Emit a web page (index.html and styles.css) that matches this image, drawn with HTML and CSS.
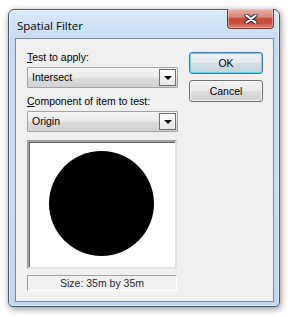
FILE: index.html
```html
<!DOCTYPE html>
<html lang="en">
<head>
    <meta charset="UTF-8">
    <meta name="viewport" content="width=device-width, initial-scale=1.0">
    <title>Spatial Filter</title>
    <link rel="stylesheet" href="styles.css">
</head>

<body>
    <div class="window">
        <div class="titlebar">
            <span class="title">Spatial Filter</span>
            <button type="button" class="close-btn" aria-label="Close">
                <svg width="14" height="10" viewBox="0 0 14 10">
                    <path d="M2.5 1.5 L11.5 8.5 M11.5 1.5 L2.5 8.5" stroke="#3b3340" stroke-width="4.2" stroke-linecap="round" fill="none"/>
                    <path d="M2.5 1.5 L11.5 8.5 M11.5 1.5 L2.5 8.5" stroke="#ffffff" stroke-width="2.2" stroke-linecap="round" fill="none"/>
                </svg>
            </button>
        </div>

        <form action="#" class="client">
            <div class="left-col">
                <label class="field-label"><u>T</u>est to apply:</label>
                <div class="combo">
                    <span class="combo-text">Intersect</span>
                    <span class="combo-arrow"></span>
                </div>

                <label class="field-label"><u>C</u>omponent of item to test:</label>
                <div class="combo">
                    <span class="combo-text">Origin</span>
                    <span class="combo-arrow"></span>
                </div>

                <div class="preview">
                    <svg width="146" height="125" viewBox="0 0 146 125">
                        <circle cx="73.5" cy="62.5" r="52.5" fill="#000"/>
                    </svg>
                </div>
                <div class="size-label">Size: 35m by 35m</div>
            </div>

            <div class="right-col">
                <button type="submit" class="btn default">OK</button>
                <button type="button" class="btn">Cancel</button>
            </div>
        </form>
    </div>
</body>
</html>
```

FILE: styles.css
```css
* {
    box-sizing: border-box;
}

body {
    margin: 0;
    width: 288px;
    height: 317px;
    overflow: hidden;
    background-color: #ffffff;
    font-family: "Liberation Sans", Arial, sans-serif;
    font-size: 10.5px;
    color: #000;
}

.window {
    margin: 9px 0 0 8px;
    width: 272px;
    height: 298px;
    border: 1px solid #4a5566;
    border-radius: 6px 6px 5px 5px;
    padding: 0 5px 4px 6px;
    display: flex;
    flex-direction: column;
    background: linear-gradient(to bottom, #d8e8f9 0%, #c2daf3 12%, #c3dbf4 60%, #bfd8f2 100%);
    box-shadow: inset 0 0 0 1px rgba(255, 255, 255, 0.55), 1px 2px 7px rgba(0, 0, 0, 0.45);
}

.titlebar {
    height: 28px;
    display: flex;
    justify-content: space-between;
    align-items: flex-start;
}

.title {
    font-family: "Open Sans", "Liberation Sans", sans-serif;
    font-size: 11.5px;
    padding: 8px 0 0 2px;
    color: #000;
}

.close-btn {
    margin-top: -1px;
    width: 47px;
    height: 20px;
    padding: 0;
    border: 1px solid #6b3a33;
    border-top: none;
    border-radius: 0 0 4px 4px;
    background: linear-gradient(to bottom, #e9b0a4 0%, #d98a7b 40%, #c44a35 52%, #c9523c 75%, #dc8a77 100%);
    box-shadow: inset 0 0 0 1px rgba(255, 210, 200, 0.45);
    display: flex;
    align-items: center;
    justify-content: center;
}

.client {
    flex: 1;
    margin: 0;
    border: 1px solid #7d8a9c;
    background-color: #f0f0f0;
    padding: 12px 0 0 11px;
    display: flex;
    gap: 11px;
}

.left-col {
    width: 151px;
    display: flex;
    flex-direction: column;
}

.field-label {
    display: block;
    height: 13px;
    line-height: 13px;
    margin-bottom: 3px;
    white-space: nowrap;
}

.combo {
    height: 21px;
    border: 1px solid #a3a3a3;
    border-radius: 1px;
    background: linear-gradient(to bottom, #f4f4f4 0%, #ebebeb 48%, #dcdcdc 52%, #d2d2d2 100%);
    display: flex;
    align-items: center;
    justify-content: space-between;
    margin-bottom: 7px;
}

.combo + .preview {
    margin-top: 1px;
}

.combo-text {
    padding-left: 4px;
    line-height: 19px;
}

.combo-arrow {
    width: 17px;
    height: 17px;
    margin-right: 1px;
    border: 1px solid #6f6f6f;
    background: linear-gradient(to bottom, #ffffff, #e6e6e6);
    display: flex;
    align-items: center;
    justify-content: center;
}

.combo-arrow::after {
    content: '';
    width: 0;
    height: 0;
    border-left: 4px solid transparent;
    border-right: 4px solid transparent;
    border-top: 4px solid #000;
    margin-top: 1px;
}

.preview {
    width: 150px;
    height: 129px;
    background-color: #ffffff;
    border-style: solid;
    border-width: 2px;
    border-color: #a0a0a0 #e3e3e3 #e3e3e3 #a0a0a0;
    box-shadow: inset 1px 1px 0 #696969;
    margin-bottom: 6px;
}

.preview svg {
    display: block;
    margin: -1px 0 0 -1px;
}

.size-label {
    width: 150px;
    height: 16px;
    border-style: solid;
    border-width: 1px;
    border-color: #a0a0a0 #ffffff #ffffff #a0a0a0;
    text-align: center;
    line-height: 14px;
    color: #1e2a3a;
}

.right-col {
    padding-top: 1px;
    display: flex;
    flex-direction: column;
    gap: 6px;
}

.btn {
    width: 74px;
    height: 22px;
    padding: 0;
    font-family: "Liberation Sans", Arial, sans-serif;
    font-size: 10.5px;
    color: #000;
    border: 1px solid #707070;
    border-radius: 3px;
    background: linear-gradient(to bottom, #f2f2f2 0%, #ebebeb 48%, #dddddd 52%, #cfcfcf 100%);
    box-shadow: inset 0 0 0 1px rgba(255, 255, 255, 0.7);
}

.btn.default {
    border-color: #3c7fb1;
    background: linear-gradient(to bottom, #eef3f6 0%, #e3ebf0 48%, #d2dee5 52%, #c5d3dc 100%);
    box-shadow: inset 0 0 0 1px #63d4f9;
}
```
